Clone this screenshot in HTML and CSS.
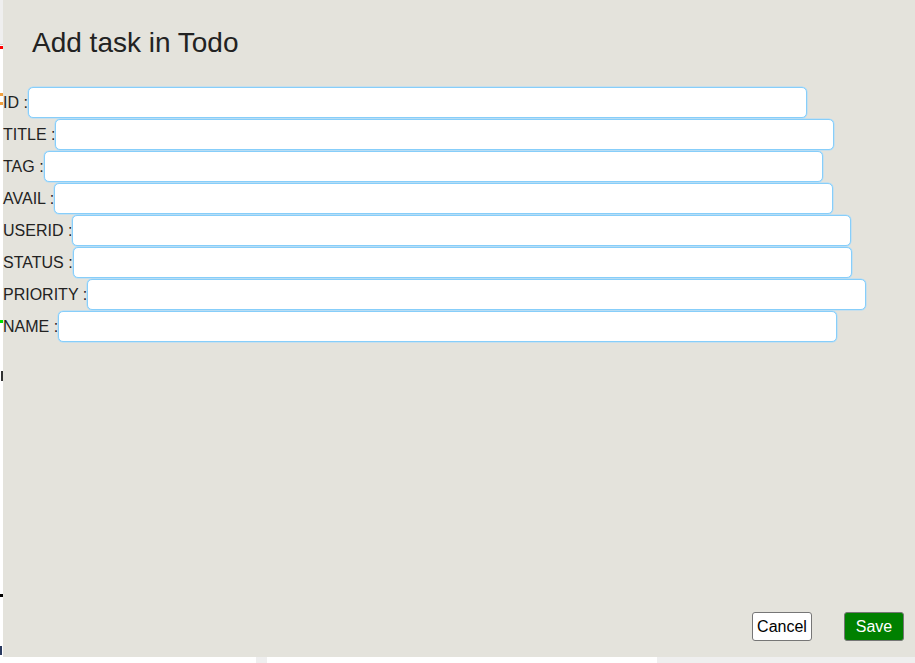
FILE: index.html
```html
<!DOCTYPE html>
<html>
<head>
<meta charset="utf-8">
<link rel="stylesheet" href="styles.css">
</head>
<body>
<div class="page">
  <div class="topbar"></div>
  <div class="redline"></div>
  <div class="content">
    <div class="side">
      <span class="mark mark-i"></span>
      <span class="mark mark-green"></span>
      <span class="mark mark-e"></span>
      <span class="mark mark-black"></span>
      <span class="mark mark-h"></span>
    </div>
  </div>
  <div class="bottom">
    <div class="b-white1"></div>
    <div class="b-gray1"></div>
    <div class="b-white2"></div>
    <div class="b-gray2"></div>
  </div>
</div>

<div class="modal">
  <h2 class="title">Add task in Todo</h2>
  <form class="form">
    <div class="row"><label>ID :</label><input type="text"></div>
    <div class="row"><label>TITLE :</label><input type="text"></div>
    <div class="row"><label>TAG :</label><input type="text"></div>
    <div class="row"><label>AVAIL :</label><input type="text"></div>
    <div class="row"><label>USERID :</label><input type="text"></div>
    <div class="row"><label>STATUS :</label><input type="text"></div>
    <div class="row"><label>PRIORITY :</label><input type="text"></div>
    <div class="row"><label>NAME :</label><input type="text"></div>
  </form>
  <div class="footer">
    <button class="btn btn-cancel" type="button">Cancel</button>
    <button class="btn btn-save" type="button">Save</button>
  </div>
</div>
</body>
</html>
```
FILE: styles.css
```css
html, body {
  margin: 0;
  padding: 0;
}
body {
  width: 915px;
  height: 663px;
  overflow: hidden;
  background: #ffffff;
  font-family: "Liberation Sans", Arial, sans-serif;
  position: relative;
}
.page {
  display: flex;
  flex-direction: column;
  height: 663px;
}
.topbar {
  height: 44px;
  background: #efefef;
  border-bottom: 1px solid #c8c8c8;
}
.redline {
  height: 3px;
  margin-top: 1px;
  background: #ff0000;
}
.content {
  flex: 1;
  background: #ffffff;
}
.side {
  width: 3px;
  display: flex;
  flex-direction: column;
}
.mark {
  display: block;
  width: 3px;
}
.mark-i {
  margin-top: 44px;
  height: 12px;
  background: linear-gradient(#f0a040 0 25%, transparent 25% 75%, #f0a040 75%);
}
.mark-green {
  margin-top: 215px;
  height: 3px;
  background: #00e000;
}
.mark-e {
  margin-top: 48px;
  height: 10px;
  background: linear-gradient(90deg, transparent 0 1px, #333 1px);
}
.mark-black {
  margin-top: 213px;
  height: 3px;
  background: #000;
}
.mark-h {
  margin-top: 49px;
  height: 9px;
  background: linear-gradient(90deg, #2a3a60 0 2px, transparent 2px);
}
.bottom {
  height: 6px;
  display: flex;
}
.b-white1 { width: 256px; background: #ffffff; }
.b-gray1 { width: 11px; background: #efefef; }
.b-white2 { width: 390px; background: #ffffff; }
.b-gray2 { flex: 1; background: #efefef; }

.modal {
  position: absolute;
  left: 3px;
  top: 0;
  width: 912px;
  height: 657px;
  background: #e4e3dc;
  display: flex;
  flex-direction: column;
}
.title {
  margin: 27px 0 0 29px;
  font-size: 28px;
  font-weight: normal;
  line-height: 31px;
  color: #222222;
}
.form {
  margin: 29px 0 0 0;
  display: flex;
  flex-direction: column;
}
.row {
  display: flex;
  align-items: center;
  height: 32px;
}
.row label {
  font-size: 16px;
  color: #222222;
  white-space: pre;
}
.row input {
  box-sizing: border-box;
  width: 779px;
  height: 31px;
  margin: 0 0 1px 0;
  padding: 0 6px;
  border: 1px solid #87cefa;
  border-radius: 5px;
  box-shadow: 0 0 0.5px 0.5px #a9dcfb;
  background: #ffffff;
  outline: none;
}
.footer {
  margin-top: auto;
  display: flex;
  justify-content: flex-end;
  gap: 32px;
  padding: 0 11px 16px 0;
}
.btn {
  box-sizing: border-box;
  width: 60px;
  height: 29px;
  padding: 0;
  font-family: "Liberation Sans", Arial, sans-serif;
  font-size: 16px;
  border: 1px solid #767676;
  border-radius: 3px;
}
.btn-cancel {
  background: #ffffff;
  color: #000000;
}
.btn-save {
  background: #008000;
  color: #ffffff;
}
```
